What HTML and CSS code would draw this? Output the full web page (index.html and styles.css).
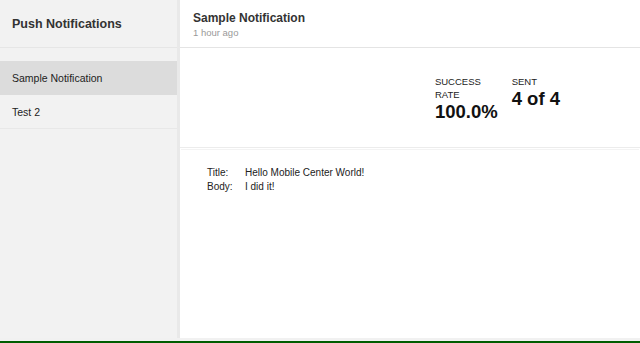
FILE: index.html
```html
<!DOCTYPE html>
<html lang="en">
  <head>
    <meta charset="UTF-8" />
    <title>Push Notifications</title>
    <link rel="stylesheet" href="styles.css">
  </head>
  <body>
    <div class="app">
      <aside>
        <div class="side-head">Push Notifications</div>
        <nav>
          <a class="active" href="#">Sample Notification</a>
          <a href="#">Test 2</a>
        </nav>
      </aside>
      <main>
        <header class="main-head">
          <div class="title">Sample Notification</div>
          <div class="when">1 hour ago</div>
        </header>
        <section class="stats">
          <div class="stat rate">
            <div class="label">Success rate</div>
            <div class="value">100.0%</div>
          </div>
          <div class="stat">
            <div class="label">Sent</div>
            <div class="value">4 of 4</div>
          </div>
        </section>
        <section class="details">
          <div class="key">Title:</div>
          <div>Hello Mobile Center World!</div>
          <div class="key">Body:</div>
          <div>I did it!</div>
        </section>
      </main>
    </div>
    <div class="status"></div>
  </body>
</html>
```

FILE: styles.css
```css
body {
  margin: 0;
  font-family: 'Liberation Sans', Arial, sans-serif;
  color: #222;
  height: 343px;
  display: flex;
  flex-direction: column;
  overflow: hidden;
}
.app {
  flex-grow: 1;
  display: flex;
  min-height: 0;
}
aside {
  width: 177px;
  background-color: #f2f2f2;
  border-right: 3px solid #e9e9e9;
}
.side-head {
  height: 48px;
  box-sizing: border-box;
  padding: 17px 12px 0;
  font-size: 12.5px;
  font-weight: bold;
  color: #333;
  border-bottom: 1px solid #e6e6e6;
}
nav {
  margin-top: 13px;
  display: flex;
  flex-direction: column;
}
nav a {
  height: 33px;
  line-height: 34px;
  padding: 0 12px;
  font-size: 10.5px;
  color: #222;
  text-decoration: none;
  border-bottom: 1px solid #e8e8e8;
}
nav a.active {
  background-color: #dcdcdc;
  border-bottom-color: #dcdcdc;
}
main {
  flex-grow: 1;
  background-color: #fff;
  display: flex;
  flex-direction: column;
}
.main-head {
  height: 48px;
  box-sizing: border-box;
  padding: 11px 13px 0;
  border-bottom: 1px solid #e4e4e4;
}
.title {
  font-size: 12px;
  font-weight: bold;
  color: #333;
}
.when {
  font-size: 9.5px;
  color: #999;
  margin-top: 2px;
}
.stats {
  height: 100px;
  box-sizing: border-box;
  display: flex;
  justify-content: flex-end;
  gap: 14px;
  padding: 27px 80px 0 0;
  border-bottom: 1px solid #ececec;
  box-shadow: 0 2px 0 -1px #fff, 0 3px 0 -1px #f3f3f3;
}
.stat .label {
  font-size: 9.5px;
  text-transform: uppercase;
  line-height: 13px;
  color: #222;
}
.stat.rate .label {
  width: 62px;
}
.stat .value {
  font-size: 18.5px;
  font-weight: bold;
  line-height: 22px;
  color: #111;
}
.details {
  display: grid;
  grid-template-columns: 38px auto;
  justify-content: start;
  row-gap: 1px;
  padding: 18px 0 0 27px;
  font-size: 10px;
  line-height: 13px;
  color: #222;
}
.status {
  background-color: #f1f1f1;
  border-bottom: 2px solid #005c00;
  height: 3px;
}
```
